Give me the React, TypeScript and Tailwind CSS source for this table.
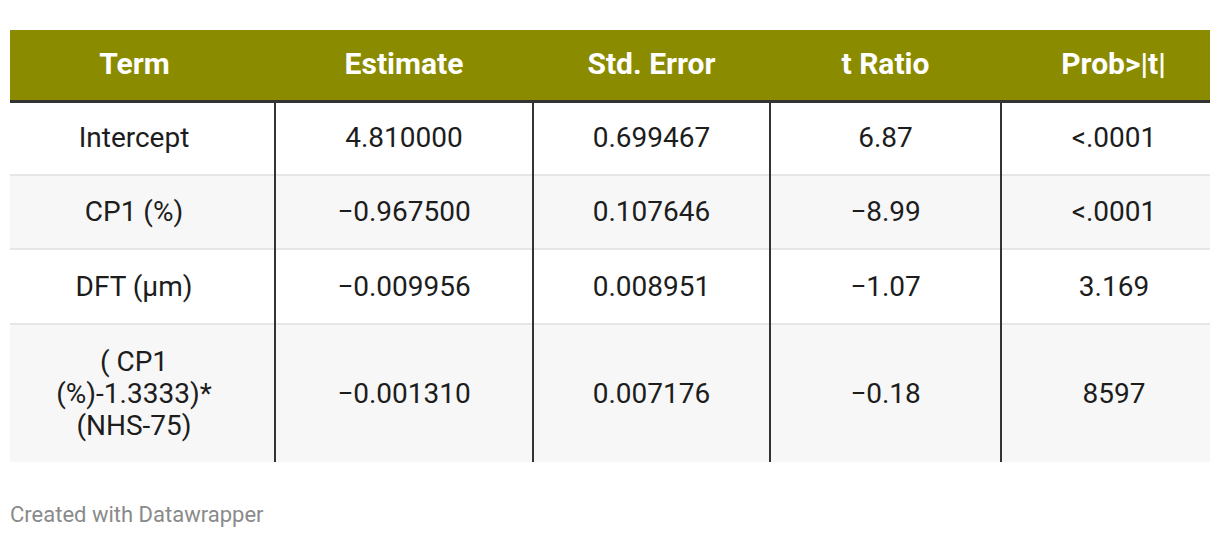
import React from "react";

const rows: string[][] = [
  ["Intercept", "4.810000", "0.699467", "6.87", "<.0001"],
  ["CP1 (%)", "\u22120.967500", "0.107646", "\u22128.99", "<.0001"],
  ["DFT (\u00b5m)", "\u22120.009956", "0.008951", "\u22121.07", "3.169"],
  ["( CP1 (%)-1.3333)* (NHS-75)", "\u22120.001310", "0.007176", "\u22120.18", "8597"],
];

const headers = ["Term", "Estimate", "Std. Error", "t Ratio", "Prob>|t|"];
const widths = ["w-[265px]", "w-[258px]", "w-[237px]", "w-[231px]", "w-[209px]"];
const rowH = ["h-[74px]", "h-[74px]", "h-[75px]", "h-[138px]"];
const colPad = ["pr-[16px]", "", "", "", "pl-[16px]"];

export default function App() {
  return (
    <div className="w-[1220px] h-[538px] bg-white px-[10px] pt-[30px]" style={{ fontFamily: "Roboto, 'Liberation Sans', sans-serif" }}>
      <table className="w-[1200px] table-fixed border-collapse">
        <colgroup>
          {widths.map((w, i) => (
            <col key={i} className={w} />
          ))}
        </colgroup>
        <thead>
          <tr className="h-[71px] bg-[#8b8b00] border-b-[3px] border-[#333333]">
            {headers.map((h, i) => (
              <th key={i} className={`text-white font-bold text-[30px] leading-[34px] text-center align-middle p-0 pb-[1px] ${colPad[i]}`}>
                {h}
              </th>
            ))}
          </tr>
        </thead>
        <tbody>
          {rows.map((r, ri) => (
            <tr
              key={ri}
              className={`${rowH[ri]} ${ri % 2 === 1 ? "bg-[#f7f7f7]" : "bg-white"} ${ri < rows.length - 1 ? "border-b-2 border-[#e6e6e6]" : ""}`}
            >
              {r.map((c, ci) => (
                <td
                  key={ci}
                  className={`text-[28px] leading-[32px] text-[#1d1d1d] text-center align-middle p-0 ${colPad[ci]} ${ci < 4 ? "border-r-2 border-r-[#333333]" : ""} ${ri === 3 && ci === 0 ? "pl-[40px] pr-[56px]" : ""}`}
                >
                  {c}
                </td>
              ))}
            </tr>
          ))}
        </tbody>
      </table>
      <div className="mt-[40px] text-[22px] text-[#8a8a8a] leading-[26px]">Created with Datawrapper</div>
    </div>
  );
}
